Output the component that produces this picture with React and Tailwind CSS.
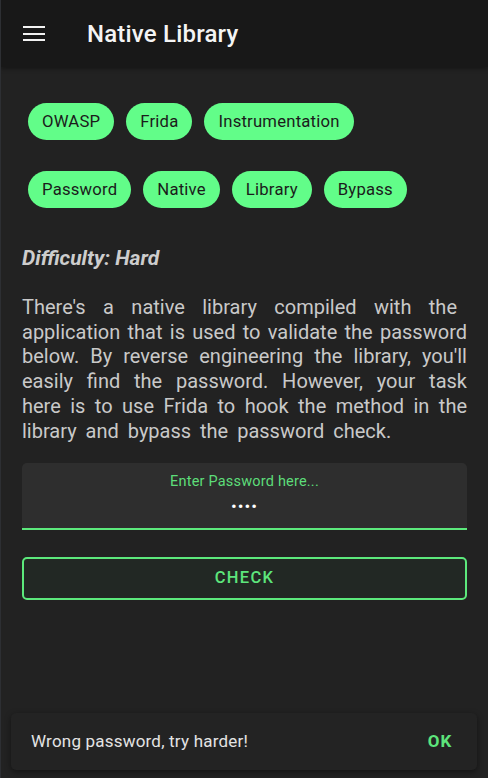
const tagsTop = ["OWASP", "Frida", "Instrumentation"];
const tagsBottom = ["Password", "Native", "Library", "Bypass"];

// line breaks as in the screenshot, each line justified to full width
const lines = [
  "There's a native library compiled with the",
  "application that is used to validate the password",
  "below. By reverse engineering the library, you'll",
  "easily find the password. However, your task",
  "here is to use Frida to hook the method in the",
];

function Chip({ label }) {
  return (
    <span className="h-[37px] px-[14px] flex items-center rounded-full bg-[#62fd89] text-[#1b1b1b] text-[16.7px] tracking-[0.2px]">
      {label}
    </span>
  );
}

export default function App() {
  return (
    <div
      className="w-[488px] h-[778px] bg-[#222222] border-l border-[#2d2f33] flex flex-col relative overflow-hidden"
      style={{ fontFamily: "Roboto, 'Noto Sans', sans-serif" }}
    >
      <header className="h-[67px] shrink-0 bg-[#181818] flex items-center shadow-[0_2px_4px_rgba(0,0,0,0.35)] relative z-10">
        <div className="w-[22px] ml-[22px] flex flex-col gap-[4.5px]">
          <span className="h-[2px] bg-[#f2f2f2]" />
          <span className="h-[2px] bg-[#f2f2f2]" />
          <span className="h-[2px] bg-[#f2f2f2]" />
        </div>
        <h1 className="ml-[42px] text-[24px] font-medium text-[#f4f4f4] tracking-[0.2px]">
          Native Library
        </h1>
      </header>

      <main className="px-[21px] pt-[36px] flex flex-col">
        <div className="flex gap-[12px] pl-[6px]">
          {tagsTop.map((t) => (
            <Chip key={t} label={t} />
          ))}
        </div>
        <div className="flex gap-[12px] pl-[6px] mt-[31px]">
          {tagsBottom.map((t) => (
            <Chip key={t} label={t} />
          ))}
        </div>

        <p className="mt-[36px] text-[21px] font-bold italic text-[#cdcdcd] leading-[28px]">
          Difficulty: Hard
        </p>

        <div className="mt-[23px] text-[20px] text-[#c9c9c9] leading-[24.7px]">
          {lines.map((l, i) => (
            <span
              key={i}
              className={
                "block whitespace-nowrap text-justify [text-align-last:justify] [word-spacing:-1px] " +
                (i === 0 ? "pr-[10px]" : "")
              }
            >
              {l}
            </span>
          ))}
          <span className="block whitespace-nowrap [word-spacing:4px]">
            library and bypass the password check.
          </span>
        </div>

        <div className="mt-[20px] h-[67px] bg-[#2e2e2e] rounded-t-[5px] border-b-2 border-[#5ce97c] flex flex-col items-center">
          <span className="mt-[9px] text-[14.5px] leading-[20px] text-[#5ddd79] tracking-[0.2px]">
            Enter Password here...
          </span>
          <span className="mt-[6px] text-[17px] leading-[16px] text-white tracking-[1px]">
            ••••
          </span>
        </div>

        <button className="mt-[27px] h-[43px] rounded-[5px] border-2 border-[#5ce97c] bg-[#222824] text-[#5de57c] text-[16.5px] font-medium tracking-[1.3px]">
          CHECK
        </button>
      </main>

      <div className="absolute left-[10px] right-[11px] bottom-[8px] h-[57px] rounded-[5px] bg-[#232323] shadow-[0_2px_6px_rgba(0,0,0,0.45)] flex items-center justify-between pl-[20px] pr-[25px]">
        <span className="text-[17px] text-[#e4e4e4] tracking-[0.2px]">
          Wrong password, try harder!
        </span>
        <span className="text-[17px] font-bold text-[#5de57c] tracking-[0.8px]">
          OK
        </span>
      </div>
    </div>
  );
}
